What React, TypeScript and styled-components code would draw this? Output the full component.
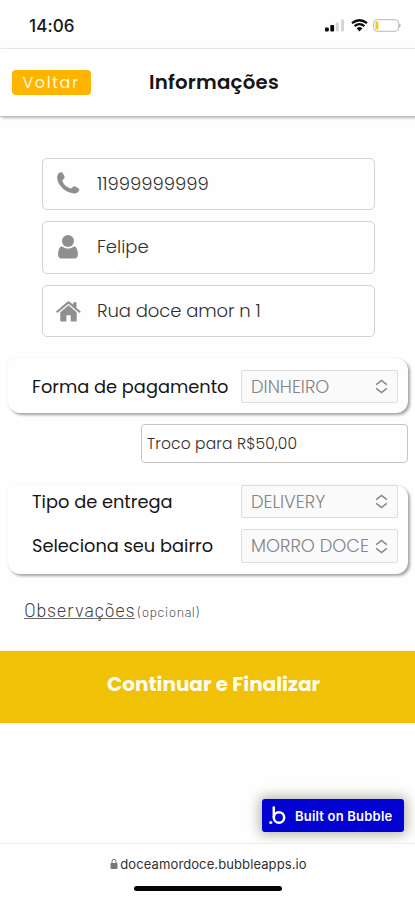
import React from 'react';
import styled, { createGlobalStyle } from 'styled-components';

const GlobalStyle = createGlobalStyle`
  * { box-sizing: border-box; }
  html, body { margin: 0; background: #fefefe; }
  body {
    font-family: Poppins, Inter, sans-serif;
    color: #161616;
  }
  button, input, select { font: inherit; }
`;

const Screen = styled.div`
  width: 415px;
  height: 900px;
  display: flex;
  flex-direction: column;
  overflow: hidden;
  background: #fefefe;
`;

const Label = styled.span<{ $size: number; $spacing?: number; $weight?: number; $color?: string }>`
  font-size: ${p => p.$size}px;
  line-height: 24px;
  letter-spacing: ${p => p.$spacing ?? 0}px;
  font-weight: ${p => p.$weight ?? 400};
  color: ${p => p.$color ?? '#161616'};
  white-space: nowrap;
`;

const SystemLabel = styled(Label)`
  font-family: Inter, sans-serif;
`;

const StatusBar = styled.div`
  flex: none;
  height: 49px;
  padding: 3px 13px 0 29px;
  display: flex;
  align-items: center;
  justify-content: space-between;
  border-bottom: 1px solid #f0f0f0;
`;

const StatusIcons = styled.div`
  display: flex;
  align-items: center;
  gap: 5.5px;
`;

const Header = styled.header`
  flex: none;
  height: 68px;
  padding: 0 12px;
  display: grid;
  grid-template-columns: 79px 1fr 60px;
  align-items: center;
  border-bottom: 1px solid #bdbdbd;
  box-shadow: 2px 1px 3px rgba(0, 0, 0, 0.28);
`;

const BackButton = styled.button`
  height: 25px;
  padding: 0 1px 0 0;
  border: 0;
  border-radius: 4px;
  background: #ffb400;
  display: flex;
  align-items: center;
  justify-content: center;
`;

const Title = styled.h1`
  margin: 0 0 1px 58px;
  font-size: 20px;
  line-height: 24px;
  display: flex;
`;

const Fields = styled.div`
  flex: none;
  margin: 41px 40px 0 42px;
  display: flex;
  flex-direction: column;
  gap: 11px;
`;

const Field = styled.div`
  height: 52.3px;
  border: 1.5px solid #d2d2d2;
  border-radius: 5px;
  display: grid;
  grid-template-columns: 54px 1fr;
  align-items: center;
`;

const FieldIcon = styled.svg`
  width: 26px;
  height: 26px;
  margin-left: 12px;
  fill: #8f8f8f;
`;

const Card = styled.section<{ $top: number; $height: number; $pad: number }>`
  flex: none;
  margin: ${p => p.$top}px 7px 0 8px;
  height: ${p => p.$height}px;
  padding: ${p => p.$pad}px 10px 0 24px;
  border-radius: 4px 12px 12px 12px;
  background: #fefefe;
  box-shadow: 2px 2px 3px rgba(0, 0, 0, 0.36), 0 0 1px rgba(0, 0, 0, 0.1);
  display: flex;
  flex-direction: column;
  gap: 11px;
`;

const CardRow = styled.div`
  display: flex;
  align-items: center;
  justify-content: space-between;
`;

const Select = styled.div`
  width: 157px;
  height: 33.5px;
  padding: 0 9px;
  border: 1px solid #dedede;
  border-radius: 2px;
  background: #fafafa;
  display: flex;
  align-items: center;
  justify-content: space-between;
`;

const ChangeField = styled.div`
  flex: none;
  align-self: flex-end;
  width: 267px;
  height: 39px;
  margin: 11px 7px 0 0;
  padding: 1px 0 0 5px;
  border: 1px solid #c4c4c4;
  border-radius: 4px;
  display: flex;
  align-items: center;
`;

const Notes = styled.div`
  flex: none;
  height: 24px;
  margin: 24px 0 0 24px;
  display: flex;
  align-items: baseline;
  gap: 3px;
  font-family: Barlow, Roboto, sans-serif;
`;

const Underlined = styled.div`
  height: 21px;
  border-bottom: 1px solid #6b6b6b;
`;

const SubmitButton = styled.button`
  flex: none;
  height: 72px;
  margin-top: 29px;
  padding: 0 0 5px 12px;
  border: 0;
  background: #f0c106;
  box-shadow: 0 0 1px #e8c94c;
  display: flex;
  align-items: center;
  justify-content: center;
`;

const Badge = styled.a`
  flex: none;
  align-self: flex-end;
  width: 142px;
  height: 33px;
  margin: 76px 11px 0 0;
  padding: 1px 0 0 7px;
  border-radius: 3px;
  background: #0202d2;
  box-shadow: 0 0 12px 3px rgba(60, 60, 40, 0.36);
  display: flex;
  align-items: center;
  gap: 9px;
`;

const BrowserBar = styled.footer`
  flex: 1;
  margin-top: 11px;
  border-top: 1px solid #eeeeee;
  background: #fefefe;
  display: flex;
  flex-direction: column;
  align-items: center;
`;

const Address = styled.div`
  display: flex;
  align-items: center;
  gap: 2px;
  margin: 8px 0 0 2px;
`;

const HomeIndicator = styled.div`
  width: 148px;
  height: 5px;
  margin-top: 10px;
  border-radius: 3px;
  background: #050505;
`;

const Chevrons = () => (
  <svg width="13" height="15" viewBox="0 0 13 15" fill="none" stroke="#868686" strokeWidth="1.5">
    <path d="M1.2 5.6 6.5 1.5l5.3 4.1M1.2 9.4l5.3 4.1 5.3-4.1" />
  </svg>
);

const Choice = ({ value }: { value: string }) => (
  <Select>
    <Label $size={17.8} $weight={300} $color="#858585">{value}</Label>
    <Chevrons />
  </Select>
);

export default function App() {
  return (
    <>
      <GlobalStyle />
      <Screen>
        <StatusBar>
          <SystemLabel $size={17} $weight={500} $spacing={0.1}>14:06</SystemLabel>
          <StatusIcons>
            <svg width="20" height="13" viewBox="0 0 20 13">
              <rect x="0" y="8.5" width="3.8" height="4" rx="1" fill="#080808" />
              <rect x="5.3" y="6" width="3.8" height="6.5" rx="1" fill="#080808" />
              <rect x="10.8" y="3.5" width="3" height="9" rx="1" fill="#d5d5d5" />
              <rect x="16" y="0.5" width="3" height="12" rx="1" fill="#d5d5d5" />
            </svg>
            <svg width="17" height="13" viewBox="0 0 17 13" fill="none" stroke="#080808">
              <path d="M1 4.2Q8.5-1.8 16 4.2" strokeWidth="2.3" />
              <path d="M3.6 7.1Q8.5 3.2 13.4 7.1" strokeWidth="2.1" />
              <path d="M5.6 9.2Q8.5 7 11.4 9.2L8.5 12.6Z" fill="#080808" stroke="none" />
            </svg>
            <svg width="29" height="13" viewBox="0 0 29 13">
              <rect x="0.7" y="0.7" width="25" height="11.6" rx="3.5" fill="#fff" stroke="#b9b9b9" />
              <rect x="2.4" y="2.5" width="3" height="8" rx="1.2" fill="#f6c91c" />
              <path d="M26.500 4.2q2 2.3 0 4.6z" fill="#909090" />
            </svg>
          </StatusIcons>
        </StatusBar>

        <Header>
          <BackButton>
            <Label $size={16} $spacing={1.6} $color="#fff8dc">Voltar</Label>
          </BackButton>
          <Title>
            <Label $size={19.8} $weight={600} $spacing={0.2}>Informações</Label>
          </Title>
        </Header>

        <Fields>
          <Field>
            <FieldIcon viewBox="0 0 26 26">
              <path d="M5.2 1.3C6.4.9 7.3 1.2 7.9 2.3l1.5 3c.5 1.1.2 1.9-.7 2.6L7.400 9c.4 4 4.300 7.600 8.700 8.500l1.800-1.600c.8-.7 1.500-.8 2.500-.3l2.900 1.600c1 .6 1.300 1.400.8 2.400-1.200 2.700-4.100 3.400-7.500 2.500C9 20.200 3.200 14 2.200 7.700 1.800 4.600 2.900 2.200 5.200 1.300z" />
            </FieldIcon>
            <Label $size={18} $weight={300} $color="#303030">11999999999</Label>
          </Field>
          <Field>
            <FieldIcon viewBox="0 0 26 26">
              <circle cx="13" cy="7" r="6" />
              <path d="M6.8 12.2c3.7 3.2 8.7 3.2 12.4 0 2.4.8 3.7 4.1 3.7 8.3 0 2.5-1.2 4-3.7 4H6.800c-2.500 0-3.700-1.500-3.700-4 0-4.200 1.300-7.500 3.700-8.300z" />
            </FieldIcon>
            <Label $size={18} $weight={300} $color="#303030">Felipe</Label>
          </Field>
          <Field>
            <FieldIcon viewBox="0 0 26 26">
              <path d="m1 13.500 11.400-9.700q1.100-.9 2.200 0l3.600 3V4.200h3.300v5.500l4.300 3.800-1.300 1.500-11-9.300-11.200 9.300z" />
              <path d="m13.500 7.200 8.200 7v8.300q0 1-1 1h-5v-6.300h-4.300v6.300h-5q-1.100 0-1.100-1v-8.300z" />
            </FieldIcon>
            <Label $size={18} $weight={300} $spacing={-0.08} $color="#303030">Rua doce amor n 1</Label>
          </Field>
        </Fields>

        <Card $top={21} $height={55} $pad={12}>
          <CardRow>
            <Label $size={17.8}>Forma de pagamento</Label>
            <Choice value="DINHEIRO" />
          </CardRow>
        </Card>

        <ChangeField>
          <Label $size={15.5} $weight={300} $spacing={0.13} $color="#303030">Troco para R$50,00</Label>
        </ChangeField>

        <Card $top={22} $height={89} $pad={0}>
          <CardRow>
            <Label $size={17.8}>Tipo de entrega</Label>
            <Choice value="DELIVERY" />
          </CardRow>
          <CardRow>
            <Label $size={17.8}>Seleciona seu bairro</Label>
            <Choice value="MORRO DOCE" />
          </CardRow>
        </Card>

        <Notes>
          <Underlined>
            <Label $size={19} $weight={300} $spacing={0.47} $color="#404040">Observações</Label>
          </Underlined>
          <Label $size={13.8} $weight={300} $spacing={0.4} $color="#505050">(opcional)</Label>
        </Notes>

        <SubmitButton>
          <Label $size={20} $weight={700} $color="#fffdf0">Continuar e Finalizar</Label>
        </SubmitButton>

        <Badge>
          <svg width="17" height="19" viewBox="0 0 17 19" fill="none" stroke="#fff" strokeWidth="2.5">
            <path d="M4.8 0.5V11.5" />
            <circle cx="10" cy="11.5" r="5.2" />
            <circle cx="1.8" cy="16.5" r="1.6" fill="#fff" stroke="none" />
          </svg>
          <SystemLabel $size={13} $weight={600} $spacing={0.2} $color="#ffffff">Built on Bubble</SystemLabel>
        </Badge>

        <BrowserBar>
          <Address>
            <svg width="8" height="12" viewBox="0 0 8 12">
              <path d="M2 6V3.3a2 2 0 0 1 4 0V6" fill="none" stroke="#777" />
              <rect x="0.5" y="5" width="7" height="6" rx="1" fill="#777" />
            </svg>
            <SystemLabel $size={13} $spacing={0.1} $color="#303030">doceamordoce.bubbleapps.io</SystemLabel>
          </Address>
          <HomeIndicator />
        </BrowserBar>
      </Screen>
    </>
  );
}
